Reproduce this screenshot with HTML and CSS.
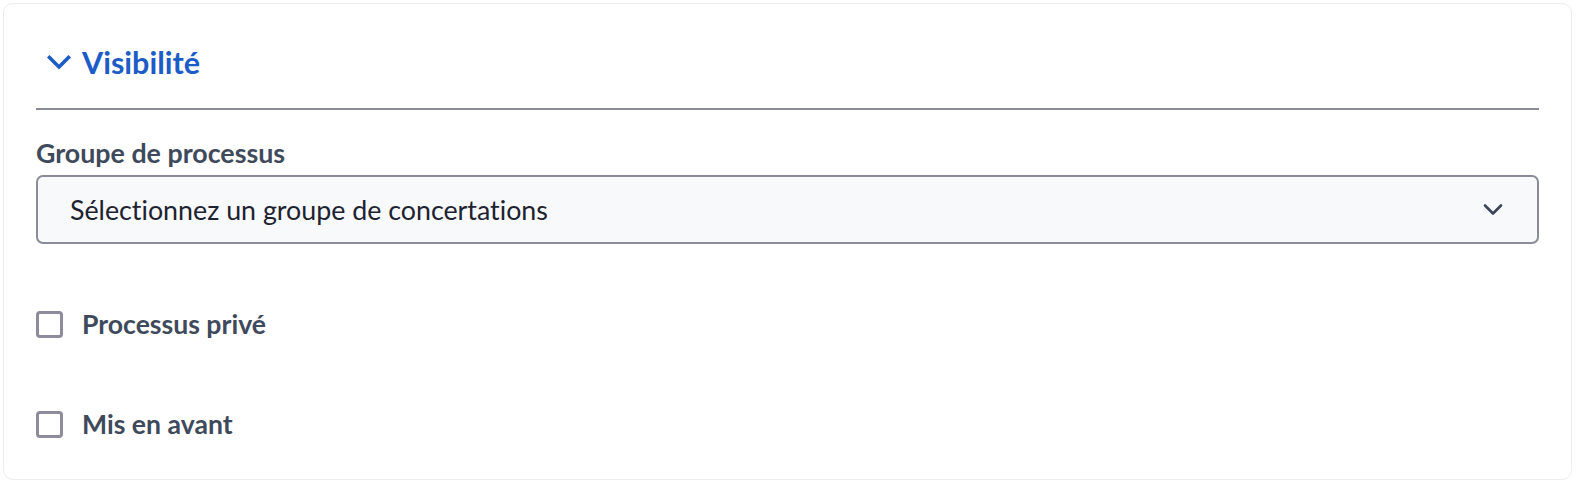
FILE: index.html
```html
<!DOCTYPE html>
<html lang="fr">
<head>
<meta charset="utf-8">
<title>Visibilité</title>
<link rel="stylesheet" href="styles.css">
</head>
<body>
<div class="page">
  <section class="card">
    <button class="section-toggle" type="button">
      <svg class="toggle-icon" width="24" height="15" viewBox="0 0 24 15" aria-hidden="true">
        <polyline points="2.5,2.5 12,12 21.5,2.5" fill="none" stroke="currentColor" stroke-width="3.6" stroke-linecap="square" stroke-linejoin="miter"/>
      </svg>
      <span class="toggle-title">Visibilité</span>
    </button>
    <hr class="divider">
    <div class="field">
      <label class="field-label" for="group">Groupe de processus</label>
      <div class="select" id="group">
        <span class="select-value">Sélectionnez un groupe de concertations</span>
        <svg class="select-icon" width="20" height="13" viewBox="0 0 20 13" aria-hidden="true">
          <polyline points="2,2.5 10,10.5 18,2.5" fill="none" stroke="currentColor" stroke-width="2.6" stroke-linecap="round" stroke-linejoin="round"/>
        </svg>
      </div>
    </div>
    <div class="checks">
      <label class="check-row"><span class="checkbox"></span><span class="check-label">Processus privé</span></label>
      <label class="check-row"><span class="checkbox"></span><span class="check-label">Mis en avant</span></label>
    </div>
  </section>
</div>
</body>
</html>
```

FILE: styles.css
```css
html, body {
  margin: 0;
  padding: 0;
  background: #ffffff;
}

.page {
  padding: 3px 8px 10px 3px;
  font-family: Lato, "Noto Sans", "Liberation Sans", sans-serif;
  font-variant-ligatures: none;
}

.card {
  border: 1px solid #ececf3;
  border-radius: 10px;
  background: #ffffff;
  padding: 38px 32px 35px 32px;
}

.section-toggle {
  display: flex;
  align-items: center;
  gap: 11px;
  padding: 0 0 0 11px;
  margin: 0;
  border: 0;
  background: none;
  color: #1b5cc7;
  height: 40px;
  font-family: inherit;
  font-variant-ligatures: none;
  cursor: pointer;
}

.toggle-icon {
  display: block;
  margin-top: 1px;
}

.toggle-title {
  font-size: 30.5px;
  font-weight: 700;
  line-height: 40px;
}

.divider {
  margin: 26px 0 0 0;
  border: 0;
  border-top: 2px solid #8a8d98;
  height: 0;
}

.field {
  display: flex;
  flex-direction: column;
  gap: 4px;
  margin-top: 25px;
}

.field-label {
  font-size: 26.8px;
  font-weight: 700;
  line-height: 36px;
  color: #3e4a5b;
}

.select {
  display: flex;
  align-items: center;
  justify-content: space-between;
  height: 69px;
  box-sizing: border-box;
  border: 2px solid #8a8d99;
  border-radius: 7px;
  background: #f8f9fb;
  padding: 0 34px 0 32px;
}

.select-value {
  font-size: 26.8px;
  line-height: 36px;
  color: #1d2330;
}

.select-icon {
  display: block;
  color: #3a4557;
}

.checks {
  display: flex;
  flex-direction: column;
  gap: 60px;
  margin-top: 60px;
}

.check-row {
  display: flex;
  align-items: center;
  gap: 19px;
  height: 40px;
}

.checkbox {
  width: 27px;
  height: 27px;
  box-sizing: border-box;
  border: 3px solid #8e8b9c;
  border-radius: 4px;
  background: #ffffff;
  flex: none;
}

.check-label {
  font-size: 26.6px;
  font-weight: 700;
  line-height: 36px;
  color: #3e4a5b;
}
```
